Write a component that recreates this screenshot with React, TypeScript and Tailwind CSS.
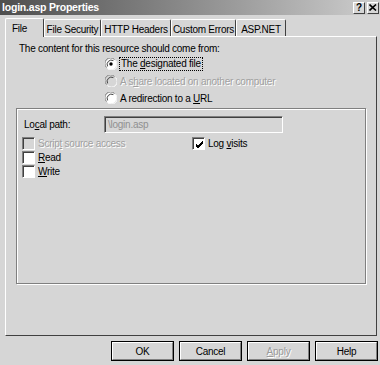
function Radio({ checked, disabled }: { checked?: boolean; disabled?: boolean }) {
  return (
    <svg width="12" height="12" viewBox="0 0 12 12" className="shrink-0">
      <circle cx="6" cy="6" r="5.5" fill={disabled ? "#d6d6d6" : "#ffffff"} />
      <path d="M1.5 9.5 A5.5 5.5 0 0 1 9.5 1.5" stroke="#808080" strokeWidth="1" fill="none" />
      <path d="M2.6 8.4 A4.3 4.3 0 0 1 8.4 2.6" stroke="#404040" strokeWidth="1" fill="none" />
      <path d="M10.5 2.5 A5.5 5.5 0 0 1 2.5 10.5" stroke="#ffffff" strokeWidth="1" fill="none" />
      {checked && <circle cx="6" cy="6" r="1.7" fill="#000000" />}
    </svg>
  );
}

function Check({ checked, disabled }: { checked?: boolean; disabled?: boolean }) {
  return (
    <div
      className={`w-[13px] h-[13px] shrink-0 border-t border-l border-t-[#808080] border-l-[#808080] border-b border-r border-b-white border-r-white ${
        disabled ? "bg-[#d6d6d6]" : "bg-white"
      }`}
    >
      <div className="w-full h-full border-t border-l border-t-[#404040] border-l-[#404040] flex items-center justify-center">
        {checked && (
          <svg width="9" height="9" viewBox="0 0 9 9">
            <path d="M1 4 L3 6 L8 1 M1 5 L3 7 L8 2 M1 6 L3 8 L8 3" stroke="#000" strokeWidth="1" fill="none" />
          </svg>
        )}
      </div>
    </div>
  );
}

function Tab({ label, active, w }: { label: string; active?: boolean; w: string }) {
  return (
    <div
      className={`${w} flex items-start whitespace-nowrap border-t border-l border-t-white border-l-white border-r border-r-[#404040] rounded-t-[2px] ${
        active ? "h-[19px] pt-[2px] -mb-px relative z-10 bg-[#d6d6d6] pl-[6px]" : "h-[17px] pt-[2px] justify-center"
      }`}
    >
      {label}
    </div>
  );
}

function Button({ children, disabled }: { children: React.ReactNode; disabled?: boolean }) {
  return (
    <div className="w-[63px] h-[20px] border border-black">
      <div className="w-full h-full border-t border-l border-t-white border-l-white border-b border-r border-b-[#808080] border-r-[#808080] flex items-center justify-center">
        <span className={disabled ? "text-[#9a9a9a] [text-shadow:1px_1px_0_#fff]" : ""}>{children}</span>
      </div>
    </div>
  );
}

export default function App() {
  return (
    <div className="w-[380px] h-[365px] bg-[#d6d6d6] font-['Liberation_Sans',Arial,sans-serif] text-[10px] tracking-[-0.25px] text-black overflow-hidden whitespace-nowrap">
      {/* title bar */}
      <div className="h-[15px] flex items-center bg-gradient-to-r from-[#4e4e4e] via-[#8c8c8c] to-[#cfcfcf] pl-[2px] pr-[1px]">
        <span className="text-white font-bold text-[10.5px] tracking-[-0.2px] leading-none">login.asp Properties</span>
        <div className="ml-auto flex gap-[2px]">
          <div className="w-[12px] h-[12px] bg-[#d6d6d6] border-t border-l border-white border-b border-r border-b-[#404040] border-r-[#404040] flex items-center justify-center font-bold text-[10px] leading-none">
            ?
          </div>
          <div className="w-[12px] h-[12px] bg-[#d6d6d6] border-t border-l border-white border-b border-r border-b-[#404040] border-r-[#404040] flex items-center justify-center">
            <svg width="8" height="7" viewBox="0 0 8 7">
              <path d="M0.5 0.5 L7 6.5 M7 0.5 L0.5 6.5" stroke="#000" strokeWidth="1.6" />
            </svg>
          </div>
        </div>
      </div>

      <div className="pl-[5px] pr-[3px] pt-[3px]">
        {/* tabs */}
        <div className="flex items-end h-[18px]">
          <Tab label="File" active w="w-[39px]" />
          <Tab label="File Security" w="w-[57px]" />
          <Tab label="HTTP Headers" w="w-[70px]" />
          <Tab label="Custom Errors" w="w-[65px]" />
          <Tab label="ASP.NET" w="w-[50px]" />
        </div>

        {/* panel */}
        <div className="h-[300px] border-t border-l border-t-white border-l-white border-r border-b border-r-[#404040] border-b-[#404040]">
          <div className="pl-[13px] pt-[5px] leading-[13px]">The content for this resource should come from:</div>

          <div className="pl-[99px] mt-[3px] flex flex-col gap-[5px]">
            <div className="flex items-center gap-[2px] h-[12px]">
              <Radio checked />
              <span className="border border-dotted border-black px-[1px] leading-[12px]">
                The <u>d</u>esignated file
              </span>
            </div>
            <div className="flex items-center gap-[3px] h-[12px] text-[#a0a0a0] [text-shadow:1px_1px_0_#fff]">
              <Radio disabled />
              <span>
                A s<u>h</u>are located on another computer
              </span>
            </div>
            <div className="flex items-center gap-[3px] h-[12px]">
              <Radio />
              <span>
                A redirection to a <u>U</u>RL
              </span>
            </div>
          </div>

          {/* group box */}
          <div className="ml-[10px] w-[350px] mt-[4px] h-[176px] border border-[#808080] shadow-[inset_1px_1px_0_#fff,1px_1px_0_#fff]">
            <div className="flex items-center pl-[7px] pt-[7px]">
              <span className="w-[80px]">
                Lo<u>c</u>al path:
              </span>
              <div className="w-[179px] h-[17px] border-t border-l border-t-[#808080] border-l-[#808080] border-b border-r border-b-white border-r-white">
                <div className="w-full h-full border-t border-l border-t-[#404040] border-l-[#404040] pl-[2px] text-[#909090] leading-[14px]">
                  \login.asp
                </div>
              </div>
            </div>

            <div className="flex pl-[5px] mt-[4px]">
              <div className="flex flex-col gap-[1px] w-[170px]">
                <div className="flex items-center gap-[3px] h-[13px] text-[#a0a0a0] [text-shadow:1px_1px_0_#fff]">
                  <Check disabled />
                  <span>
                    Scrip<u>t</u> source access
                  </span>
                </div>
                <div className="flex items-center gap-[3px] h-[13px]">
                  <Check />
                  <span>
                    <u>R</u>ead
                  </span>
                </div>
                <div className="flex items-center gap-[3px] h-[13px]">
                  <Check />
                  <span>
                    <u>W</u>rite
                  </span>
                </div>
              </div>
              <div className="flex items-center gap-[3px] h-[13px]">
                <Check checked />
                <span>
                  Log <u>v</u>isits
                </span>
              </div>
            </div>
          </div>
        </div>

        {/* buttons */}
        <div className="flex justify-end gap-[5px] mt-[5px] -mr-[1px]">
          <Button>OK</Button>
          <Button>Cancel</Button>
          <Button disabled>
            <u>A</u>pply
          </Button>
          <Button>Help</Button>
        </div>
      </div>
    </div>
  );
}
